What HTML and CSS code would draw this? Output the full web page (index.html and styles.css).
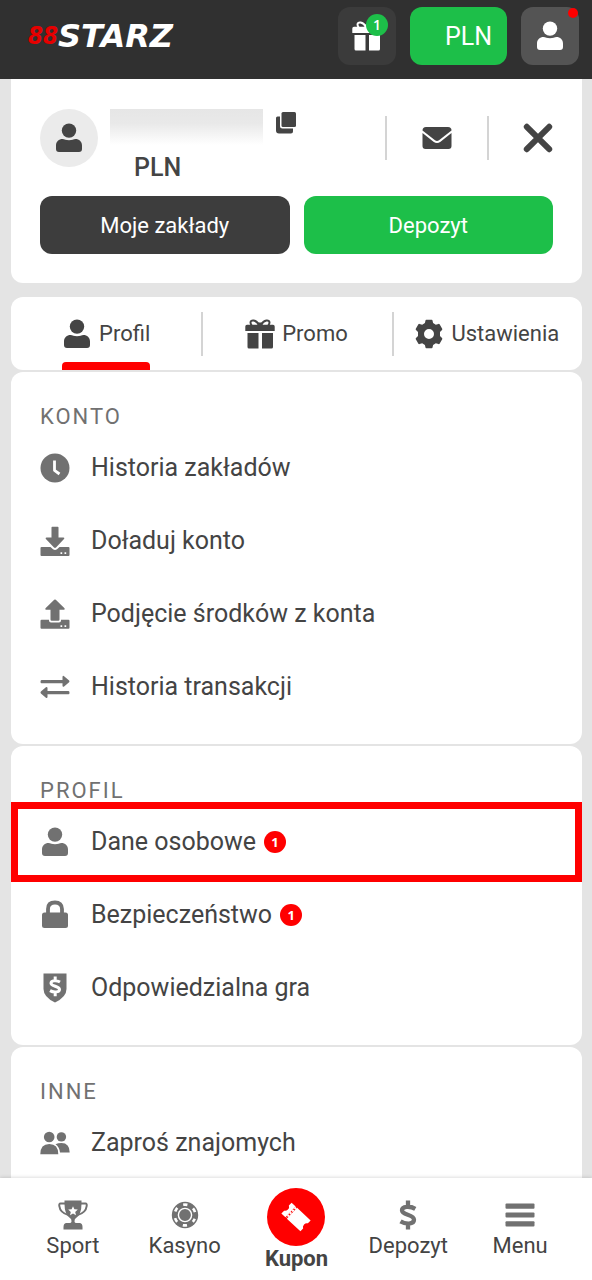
FILE: index.html
```html
<!DOCTYPE html>
<html lang="pl">
<head>
<meta charset="utf-8">
<meta name="viewport" content="width=device-width, initial-scale=1">
<title>88STARZ – Profil</title>
<link rel="stylesheet" href="styles.css">
</head>
<body>
<svg class="sprite" aria-hidden="true">
  <symbol id="i-user" viewBox="0 0 30 30"><circle cx="15" cy="7.6" r="7.2"/><path d="M2 26v-3.500c0-4 3-6.500 6.500-6.500 2 0 3.500 1.300 6.500 1.300s4.500-1.300 6.500-1.300c3.500 0 6.500 2.500 6.500 6.500V26q0 3-3 3H5q-3 0-3-3z"/></symbol>
  <symbol id="i-gift" viewBox="0 0 30 30"><path fill="none" stroke="currentColor" stroke-width="2" d="M14 6C11 .5 5.500 .5 5.500 3.500c0 1.500 .8 2.500 1.500 3.500M16 6C19 .5 24.500 .5 24.500 3.500c0 1.500-.8 2.500-1.500 3.500M15 5.500l-4 3M15 5.500l4 3"/><rect x="12.600" y="3.500" width="4.800" height="4" rx="1"/><path d="M2 5.800h26q1.700 0 1.700 1.700V12H.3V7.500Q.3 5.800 2 5.800zM2.500 14H13.500V29.500H4q-1.500 0-1.500-1.500zM17 14H28V28q0 1.500-1.500 1.500H17z"/></symbol>
  <symbol id="i-gear" viewBox="0 0 30 30"><path fill-rule="evenodd" d="M11.500 1.500Q11.500.8 12.300.8h5.400q.8 0 .8.700l.6 2.600 2.700 1.600 2.700-.8q.7-.2 1.100.4l2.600 4.500q.3.700-.2 1.200l-2 2v4l2 2q.5.500.2 1.200l-2.600 4.500q-.4.600-1.100.4l-2.700-.8-2.700 1.600-.6 2.600q0 .8-.8.800h-5.400q-.8 0-.8-.8l-.6-2.600-2.700-1.600-2.700.8q-.7.200-1.100-.4l-2.600-4.500q-.3-.7.200-1.200l2-2v-4l-2-2q-.5-.5-.2-1.200l2.600-4.500q.4-.6 1.100-.4l2.700.8 2.700-1.600zM15 10a5 5 0 1 0 0 10a5 5 0 1 0 0-10z"/></symbol>
  <symbol id="i-copy" viewBox="0 0 22 24"><path d="M8 1h11.500q1.500 0 1.500 1.500v12q0 1.500-1.500 1.500H8q-1.500 0-1.500-1.500v-12Q6.500 1 8 1z"/><path d="M1 7q0-1.500 1.500-1.500H5V15q0 2.500 2.500 2.500H18v3q0 2-2 2H4q-3 0-3-3z"/></symbol>
  <symbol id="i-mail" viewBox="0 0 30 30"><path d="M.5 7.500q0-3.500 3.500-3.500h22q3.500 0 3.500 3.500L17 17.300q-2 1.500-4 0z"/><path d="M.5 10L11.500 18.800q3.500 2.500 7 0L29.500 10V23q0 3-3 3h-23q-3 0-3-3z"/></symbol>
  <symbol id="i-close" viewBox="0 0 30 30"><path fill="none" stroke="currentColor" stroke-width="6" stroke-linecap="round" d="M3.800 3.800L26.200 26.200M26.200 3.800L3.800 26.200"/></symbol>
  <symbol id="i-clock" viewBox="0 0 30 30"><circle cx="15" cy="15" r="14.500"/><path fill="none" stroke="#fff" stroke-width="2.800" stroke-linejoin="round" d="M14.500 7.500v9.800l5 3.700"/></symbol>
  <symbol id="i-down" viewBox="0 0 30 30"><path d="M11.500 1.500q0-.8.8-.8h5.400q.8 0 .8.800V11.500h5q1.600.2.500 1.500L16 21.500q-1 .9-2 0L5.900 13q-1-1.300.6-1.500h5z"/><path fill-rule="evenodd" d="M1.500 21H10.500l2.500 2.300q2 1.600 4 0L19.500 21H28.500q1 0 1 1v7q0 1-1 1h-27q-1 0-1-1v-7q0-1 1-1zM20.500 26.200v1.700h1.700v-1.700zM24.500 26.200v1.700h1.700v-1.700z"/></symbol>
  <symbol id="i-up" viewBox="0 0 30 30"><path d="M14.200.8q.8-.7 1.600 0L24.500 9.300q.8 1.200-.5 1.500H19.500V20.500q0 1.200-1.200 1.200h-6.600q-1.200 0-1.200-1.200V10.800H6q-1.300-.3-.5-1.500z"/><path fill-rule="evenodd" d="M1.500 20.800H9v.7q0 2 2 2h8q2 0 2-2v-.7h7.500q1 0 1 1v7q0 1-1 1h-27q-1 0-1-1v-7q0-1 1-1zM20.500 26.200v1.700h1.700v-1.700zM24.500 26.200v1.700h1.700v-1.700z"/></symbol>
  <symbol id="i-swap" viewBox="0 0 30 30"><path d="M1.500 8H22.500V5q.2-1.800 1.600-.8l5 4.300q.8.900 0 1.700l-5 4.300q-1.500.8-1.600-.8V11.300H1.500q-1-.2-1-1.650t1-1.650zM28.500 19H7.500V16q-.2-1.700-1.600-.8l-5 4.400q-.9.900 0 1.800l5 4.400q1.400.9 1.600-.8V22.300H28.500q1-.2 1-1.650t-1-1.650z"/></symbol>
  <symbol id="i-lock" viewBox="0 0 30 30"><path fill="none" stroke="currentColor" stroke-width="3.800" d="M8 14V9q0-6.500 7-6.500T22 9v5"/><path d="M4.500 12.500h21q2.500 0 2.500 2.500v10.500q0 2.500-2.500 2.500h-21q-2.500 0-2.500-2.500V15q0-2.500 2.500-2.500z"/></symbol>
  <symbol id="i-dollar" viewBox="0 0 30 30"><path fill="none" stroke="currentColor" stroke-width="4.300" d="M22.300 8.800C17 5.800 9 6 9 10.300 9 15.500 21 14 21 19.800c0 4.800-8.500 4.600-13.500 1.600M15 .5V6M15 24v5.500"/></symbol>
  <symbol id="i-shield" viewBox="0 0 30 30"><path d="M3.500 .5H26.500V16q0 8-11.500 13.500Q3.500 24 3.500 16z"/><path fill="none" stroke="#fff" stroke-width="3" d="M20 9C16.500 7 11 7.200 11 10.200c0 3.500 8.500 2.600 8.500 6.200 0 3-6 3.200-9.500 1.200M15.200 3.500v4M15.200 18.500v4.800"/></symbol>
  <symbol id="i-users" viewBox="0 0 30 30"><circle cx="9.200" cy="9" r="5.300"/><circle cx="21.400" cy="8.900" r="4.700"/><path d="M.3 26.300q0-10.300 9-10.300t9 10.300zM15.500 16.200q2.500-1.200 5.900-1.200 8.300 0 8.300 9.500H20q-.5-5.500-4.500-8.300z"/></symbol>
  <symbol id="i-cup" viewBox="0 0 30 30"><path d="M6.500 .5H23.500V4q0 11-6 14.500-1 .7-1 3 0 1.500 2 1.500h3.500q2.500.5 2.500 4v2.500h-19V27q0-3.500 2.500-4H11.500q2 0 2-1.500 0-2.300-1-3Q6.500 15 6.500 4z"/><path fill="none" stroke="currentColor" stroke-width="2" d="M8 3.500H2.500Q1 3.500 1.300 6q.9 7 9.200 9M22 3.500h5.500q1.500 0 1.200 2.500-.9 7-9.200 9"/><path fill="#fff" d="M15 6.200l1.400 3.100 3.400.3-2.600 2.300.8 3.300-3-1.800-3 1.800.8-3.300-2.600-2.300 3.400-.3z"/></symbol>
  <symbol id="i-chip" viewBox="0 0 30 30"><circle cx="15" cy="15" r="13.200"/><circle cx="15" cy="15" r="6.600" fill="none" stroke="#fff" stroke-width="1.400"/><circle cx="15" cy="15" r="10.400" fill="none" stroke="#fff" stroke-width="2.600" stroke-dasharray="4.200 6.690" stroke-dashoffset="2.100" transform="rotate(30 15 15)"/></symbol>
  <symbol id="i-ticket" viewBox="0 0 30 30"><g transform="rotate(43 15 15)"><path d="M2 7.500h5.500v15H2v-4q2-1 2-3.500t-2-3.500zM9.500 7.500H28v4q-2 1-2 3.500t2 3.500v4H9.500z"/><path stroke="currentColor" stroke-width="2" stroke-dasharray="2.200 1.200" d="M8.500 8v14"/></g></symbol>
  <symbol id="i-menu" viewBox="0 0 30 30"><rect x=".5" y="3.500" width="29" height="5.200" rx="1"/><rect x=".5" y="12.400" width="29" height="5.200" rx="1"/><rect x=".5" y="21.300" width="29" height="5.200" rx="1"/></symbol>
</svg>

<header class="topbar">
  <a class="logo" href="#" aria-label="88STARZ"><span class="logo-num">88</span><span class="logo-name">STARZ</span></a>
  <div class="topbar-actions">
    <button class="square-btn" type="button" aria-label="Bonusy"><svg class="icon"><use href="#i-gift"/></svg><span class="gift-count">1</span></button>
    <button class="balance-btn" type="button">PLN</button>
    <button class="square-btn square-btn-active" type="button" aria-label="Konto"><svg class="icon"><use href="#i-user"/></svg><span class="dot"></span></button>
  </div>
</header>

<main class="content">
  <section class="card profile">
    <div class="profile-top">
      <div class="avatar"><svg class="icon"><use href="#i-user"/></svg></div>
      <div class="identity">
        <div class="account"><span class="account-id"></span><button class="plain-btn copy-btn" type="button" aria-label="Kopiuj"><svg class="icon-copy"><use href="#i-copy"/></svg></button></div>
        <span class="currency">PLN</span>
      </div>
      <div class="profile-actions">
        <button class="plain-btn mail-btn" type="button" aria-label="Wiadomości"><svg class="icon"><use href="#i-mail"/></svg></button>
        <button class="plain-btn close-btn" type="button" aria-label="Zamknij"><svg class="icon"><use href="#i-close"/></svg></button>
      </div>
    </div>
    <div class="buttons">
      <button class="wide-btn" type="button">Moje zakłady</button>
      <button class="wide-btn wide-btn-green" type="button">Depozyt</button>
    </div>
  </section>

  <nav class="card tabs" aria-label="Sekcje konta">
    <button class="tab" type="button"><span class="tab-label tab-active"><svg class="icon"><use href="#i-user"/></svg>Profil</span></button>
    <button class="tab" type="button"><span class="tab-label"><svg class="icon"><use href="#i-gift"/></svg>Promo</span></button>
    <button class="tab" type="button"><span class="tab-label"><svg class="icon"><use href="#i-gear"/></svg>Ustawienia</span></button>
  </nav>

  <section class="card group">
    <h2 class="group-title">KONTO</h2>
    <a class="row" href="#"><svg class="icon"><use href="#i-clock"/></svg>Historia zakładów</a>
    <a class="row" href="#"><svg class="icon"><use href="#i-down"/></svg>Doładuj konto</a>
    <a class="row" href="#"><svg class="icon"><use href="#i-up"/></svg>Podjęcie środków z konta</a>
    <a class="row" href="#"><svg class="icon"><use href="#i-swap"/></svg>Historia transakcji</a>
  </section>

  <section class="card group">
    <h2 class="group-title">PROFIL</h2>
    <a class="row row-marked" href="#"><svg class="icon"><use href="#i-user"/></svg>Dane osobowe<span class="count">1</span></a>
    <a class="row" href="#"><svg class="icon"><use href="#i-lock"/></svg>Bezpieczeństwo<span class="count">1</span></a>
    <a class="row" href="#"><svg class="icon"><use href="#i-shield"/></svg>Odpowiedzialna gra</a>
  </section>

  <section class="card group">
    <h2 class="group-title">INNE</h2>
    <a class="row" href="#"><svg class="icon"><use href="#i-users"/></svg>Zaproś znajomych</a>
  </section>
</main>

<nav class="bottombar" aria-label="Nawigacja">
  <a class="nav-item" href="#"><svg class="icon"><use href="#i-cup"/></svg>Sport</a>
  <a class="nav-item" href="#"><svg class="icon"><use href="#i-chip"/></svg>Kasyno</a>
  <a class="nav-item nav-main" href="#"><span class="nav-circle"><svg class="icon"><use href="#i-ticket"/></svg></span>Kupon</a>
  <a class="nav-item" href="#"><svg class="icon"><use href="#i-dollar"/></svg>Depozyt</a>
  <a class="nav-item" href="#"><svg class="icon"><use href="#i-menu"/></svg>Menu</a>
</nav>
</body>
</html>
```

FILE: styles.css
```css
* { box-sizing: border-box; }

body {
  margin: 0;
  height: 100vh;
  display: flex;
  flex-direction: column;
  background: #e4e4e4;
  color: #444;
  font-family: Roboto, "Liberation Sans", sans-serif;
  font-size: 22px;
}

button { font: inherit; color: inherit; border: 0; padding: 0; cursor: pointer; }
a { color: inherit; text-decoration: none; }

.sprite { display: none; }
.icon { width: 30px; height: 30px; fill: currentColor; flex: none; }

/* Top bar */
.topbar {
  flex: none;
  display: flex;
  justify-content: space-between;
  padding: 7px 13px 14px 28px;
  background: #303030;
  color: #fff;
}
.logo {
  display: flex;
  align-items: center;
  height: 58px;
  font-weight: 700;
  font-style: italic;
}
.logo-num { color: #e60000; font-family: "Liberation Sans Narrow", "DejaVu Sans Condensed", sans-serif; font-size: 24px; }
.logo-name { font-family: "DejaVu Sans", sans-serif; font-size: 32px; }
.topbar-actions { display: flex; gap: 14px; }
.square-btn {
  position: relative;
  display: grid;
  place-items: center;
  width: 58px;
  height: 58px;
  border-radius: 12px;
  background: #3b3b3b;
}
.square-btn-active { background: #545454; }
.gift-count {
  position: absolute;
  top: 7px;
  right: 8px;
  width: 22px;
  border-radius: 50%;
  background: #1dbf49;
  font: 600 14px/22px "Open Sans", sans-serif;
}
.dot { position: absolute; top: 1px; right: 1px; width: 10px; height: 10px; border-radius: 50%; background: #f00; }
.balance-btn {
  width: 97px;
  padding-right: 15px;
  border-radius: 12px;
  background: #1dbf49;
  font-size: 25px;
  text-align: right;
}

/* Scrolling content */
.content {
  flex: 1;
  min-height: 0;
  overflow-y: auto;
  scrollbar-width: none;
  padding: 0 10px 0 11px;
}
.card { background: #fff; border-radius: 12px; }

.profile { padding: 30px 29px 29px; border-radius: 0 0 12px 12px; }
.profile-top { display: flex; min-height: 87px; }
.avatar {
  display: grid;
  place-items: center;
  width: 58px;
  height: 58px;
  border-radius: 50%;
  background: #ebebeb;
}
.identity { flex: 1; margin-left: 12px; }
.account { display: flex; gap: 12px; }
.account-id { width: 153px; height: 36px; background: linear-gradient(#e6e6e6, #e9e9e9 40%, #fff); }
.copy-btn { height: 28px; }
.icon-copy { width: 22px; height: 24px; fill: currentColor; }
.currency { display: block; padding: 9px 0 0 24px; font-size: 25px; font-weight: 500; line-height: 28px; }
.plain-btn { display: flex; align-items: center; background: none; }
.profile-actions { display: flex; align-items: center; height: 58px; }
.mail-btn, .close-btn { height: 44px; border-left: 2px solid #d4d4d4; }
.mail-btn { width: 102px; justify-content: center; }
.close-btn { width: 66px; justify-content: flex-end; }

.buttons { display: grid; grid-template-columns: 1fr 1fr; gap: 14px; }
.wide-btn { height: 58px; border-radius: 12px; background: #3d3d3d; color: #fff; }
.wide-btn-green { background: #1dbf49; }

/* Tabs */
.tabs { display: grid; grid-template-columns: repeat(3, 1fr); margin: 14px 0 2px; }
.tab {
  height: 73px;
  display: flex;
  justify-content: center;
  background: none;
}
.tab + .tab { background: linear-gradient(#d4d4d4, #d4d4d4) left center / 2px 44px no-repeat; }
.tab-label { position: relative; display: flex; align-items: center; gap: 7px; height: 73px; }
.tab-active::after {
  content: "";
  position: absolute;
  inset: auto 0 0;
  height: 8px;
  border-radius: 4px 4px 0 0;
  background: #f00;
}

/* Menu groups */
.group { padding: 31px 29px 21px; margin-bottom: 2px; }
.group-title {
  margin: 0;
  color: #717171;
  font-size: 22px;
  font-weight: 400;
  line-height: 28px;
  letter-spacing: 2px;
}
.row { position: relative; display: flex; align-items: center; height: 73px; font-size: 25px; }
.row .icon { color: #717171; margin-right: 21px; }
.count {
  width: 22px;
  margin-left: 8px;
  border-radius: 50%;
  background: #f00;
  color: #fff;
  font: 700 13px/22px "Open Sans", sans-serif;
  text-align: center;
}
.row-marked::after {
  content: "";
  position: absolute;
  inset: -3px -29px -4px;
  border: 7px solid #f00;
}

/* Bottom bar */
.bottombar {
  flex: none;
  position: relative;
  display: grid;
  grid-template-columns: repeat(5, 1fr);
  height: 102px;
  padding: 0 16px 0 17px;
  background: #fff;
  box-shadow: 0 0 4px rgba(0, 0, 0, .2);
}
.nav-item { display: flex; flex-direction: column; align-items: center; padding-top: 22px; line-height: 32px; }
.nav-item .icon { color: #717171; }
.nav-main { padding-top: 10px; font-weight: 700; line-height: 26px; }
.nav-circle { display: grid; place-items: center; width: 58px; height: 58px; border-radius: 50%; background: #f00; }
.nav-item .nav-circle .icon { color: #fff; }
```
